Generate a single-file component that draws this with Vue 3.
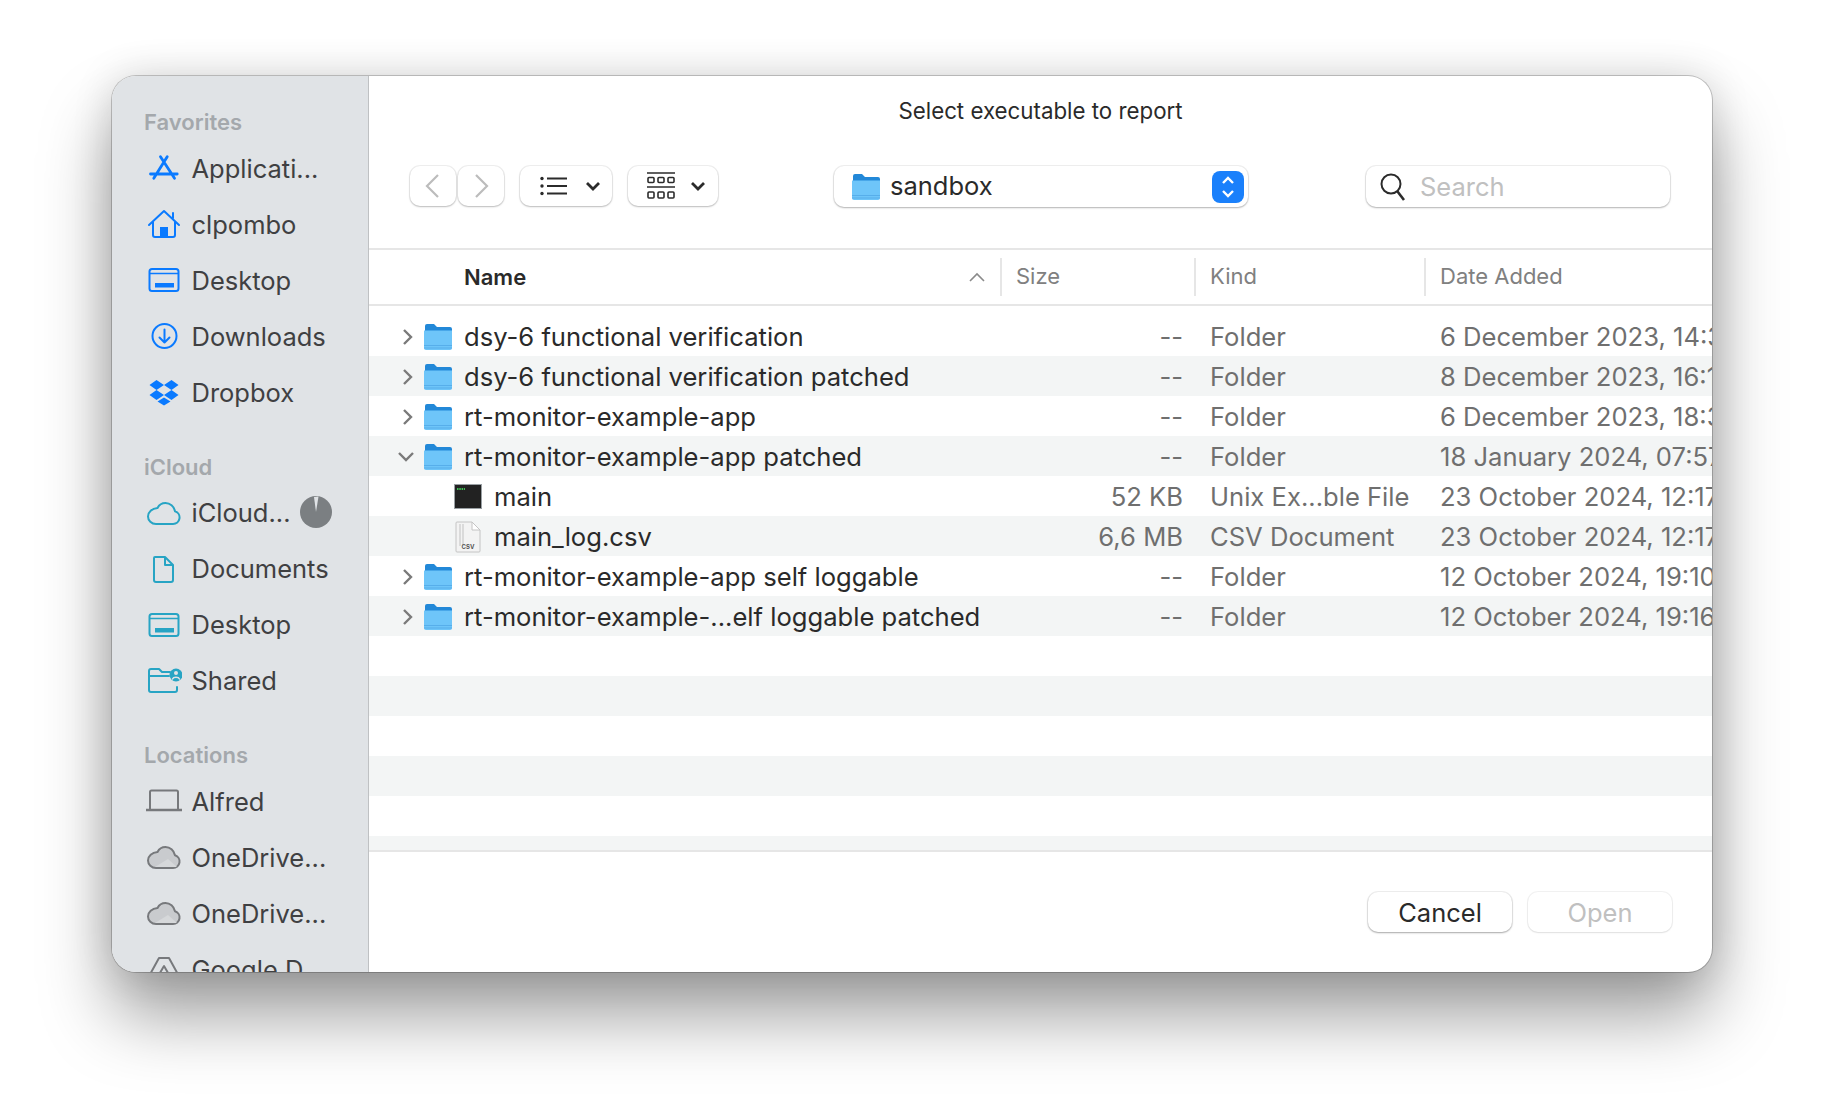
<template>
  <div class="page">
    <div class="dialog">
      <aside class="sidebar">
        <section v-for="group in sidebar" :key="group.title" class="side-group">
          <div class="side-title">{{ group.title }}</div>
          <div v-for="item in group.items" :key="item.label + item.icon" class="side-item">
            <svg class="side-icon" :style="{ color: group.color }" viewBox="0 -2 36 36" fill="none" stroke="currentColor" stroke-width="2" stroke-linecap="round" stroke-linejoin="round">
              <template v-if="item.icon === 'apps'">
                <path d="M14.500 4.700l14 21.600M21.200 4.700L7.800 26.300M4.500 22h26.700" stroke-width="2.800" />
              </template>
              <template v-else-if="item.icon === 'home'">
                <path d="M3 17L18 3l15 14M7 14v13a2 2 0 0 0 2 2h18a2 2 0 0 0 2-2V14M27 5v5" />
                <rect x="14" y="19" width="8" height="10" fill="currentColor" stroke="none" />
              </template>
              <template v-else-if="item.icon === 'desktop'">
                <rect x="3.500" y="5" width="29" height="22" rx="2.500" />
                <path d="M4 9.500h28" stroke-width="1.400" />
                <rect x="9" y="19" width="19" height="4.500" fill="currentColor" stroke="none" />
              </template>
              <template v-else-if="item.icon === 'download'">
                <circle cx="18.500" cy="16" r="12" />
                <path d="M18.500 9.500v13M13.500 17.500l5 5 5-5" />
              </template>
              <template v-else-if="item.icon === 'dropbox'">
                <path d="M10.500 4L3.500 9l7 5 7.500-5zM25.500 4L18 9l7.500 5 7-5zM10.500 14l-7 5 7 5 7.500-5zM25.500 14L18 19l7.500 5 7-5zM18 21.500l-6.500 4 6.500 4 6.500-4z" fill="currentColor" stroke="none" />
              </template>
              <template v-else-if="item.icon === 'cloud'">
                <path d="M10 27h17a6.500 6.500 0 0 0 2-12.700C28 9.500 24 6 19.500 6c-3.700 0-6.500 2-8 5C6 11.500 2 15 2 19.500 2 23.500 5.500 27 10 27z" />
              </template>
              <template v-else-if="item.icon === 'doc'">
                <path d="M9 4h10l8 8v15a2 2 0 0 1-2 2H10a2 2 0 0 1-2-2V5a1 1 0 0 1 1-1zM19 4v8h8" />
              </template>
              <template v-else-if="item.icon === 'shared'">
                <path d="M3 11V6a2 2 0 0 1 2-2h8l3 3h8M3 11h20M3 11v14a2 2 0 0 0 2 2h24a2 2 0 0 0 2-2v-3" />
                <circle cx="30" cy="10" r="6.500" fill="currentColor" stroke="none" />
                <circle cx="30" cy="8" r="2" fill="#e0e3e6" stroke="none" />
                <path d="M26.500 14c1-2.500 6-2.500 7 0" stroke="#e0e3e6" stroke-width="1.500" />
              </template>
              <template v-else-if="item.icon === 'laptop'">
                <path d="M4 24V7a1.500 1.500 0 0 1 1.500-1.500h25A1.500 1.500 0 0 1 32 7v17" />
                <path d="M0 25h36" stroke-width="2.600" stroke-linecap="butt" />
              </template>
              <template v-else-if="item.icon === 'drive'">
                <path d="M10 27h17a6.500 6.500 0 0 0 2-12.700C28 9.500 24 6 19.500 6c-3.700 0-6.500 2-8 5C6 11.500 2 15 2 19.500 2 23.500 5.500 27 10 27z" fill="#c9cbce" />
                <path d="M9 26l13-8 9 8z" fill="#d6d8da" stroke="none" />
              </template>
              <template v-else>
                <path d="M13 5h10l11 20-5 7H7l-5-7zM18 13l-7 12h14zM7 32l6-7" />
              </template>
            </svg>
            <span class="side-label">{{ item.label }}</span>
            <svg v-if="item.pie" class="pie" viewBox="0 0 32 32">
              <circle cx="16" cy="16" r="16" fill="#7b7f82" />
              <path d="M16 16L14 1 18.500 0.500z" fill="#e0e3e6" />
            </svg>
          </div>
        </section>
      </aside>

      <main class="panel">
        <div class="dialog-title">Select executable to report</div>

        <div class="toolbar">
          <div class="nav-buttons">
            <button class="tool-btn nav-btn back">
              <svg width="16" height="26" viewBox="0 0 16 26" fill="none" stroke="#bcbcbc" stroke-width="2.200"><path d="M14 2L3 13l11 11" /></svg>
            </button>
            <button class="tool-btn nav-btn forward">
              <svg width="16" height="26" viewBox="0 0 16 26" fill="none" stroke="#bcbcbc" stroke-width="2.200"><path d="M2 2l11 11L2 24" /></svg>
            </button>
          </div>
          <button class="tool-btn view-btn list-btn">
            <svg width="28" height="20" viewBox="0 0 28 20" fill="#2b2b2b">
              <circle cx="2" cy="2.500" r="1.700" /><circle cx="2" cy="10" r="1.700" /><circle cx="2" cy="17.500" r="1.700" />
              <rect x="7" y="1.500" width="20" height="2" /><rect x="7" y="9" width="20" height="2" /><rect x="7" y="16.500" width="20" height="2" />
            </svg>
            <svg class="view-chevron" width="16" height="10" viewBox="0 0 16 10" fill="none" stroke="#2b2b2b" stroke-width="2.800"><path d="M2 2l6 6 6-6" /></svg>
          </button>
          <button class="tool-btn view-btn grid-btn">
            <svg width="28" height="28" viewBox="0 0 28 28" fill="none" stroke="#2b2b2b" stroke-width="1.600">
              <path d="M0 1h28M0 15h28" />
              <rect x="1" y="5.500" width="6" height="5" rx="1" /><rect x="11" y="5.500" width="6" height="5" rx="1" /><rect x="21" y="5.500" width="6" height="5" rx="1" />
              <rect x="1" y="20" width="6" height="6" rx="1" /><rect x="11" y="20" width="6" height="6" rx="1" /><rect x="21" y="20" width="6" height="6" rx="1" />
            </svg>
            <svg class="view-chevron" width="16" height="10" viewBox="0 0 16 10" fill="none" stroke="#2b2b2b" stroke-width="2.800"><path d="M2 2l6 6 6-6" /></svg>
          </button>

          <div class="location">
            <svg class="folder loc-folder" viewBox="0 0 28 27">
              <path d="M1 3a2 2 0 0 1 2-2h7l3 3h13a2 2 0 0 1 2 2v6H1z" fill="#2288d8" />
              <path d="M0 7.500h28V25a2 2 0 0 1-2 2H2a2 2 0 0 1-2-2z" fill="#6ec5f9" />
              <path d="M0 22h28v1H0zM0 24.500h28v1H0z" fill="#57aeea" />
            </svg>
            <span class="loc-name">sandbox</span>
            <span class="stepper">
              <svg width="14" height="24" viewBox="0 0 14 24" fill="none" stroke="#fff" stroke-width="2.400"><path d="M2 8l5-5 5 5M2 16l5 5 5-5" /></svg>
            </span>
          </div>

          <div class="search">
            <svg width="28" height="30" viewBox="0 0 28 30" fill="none" stroke="#2b2b2b" stroke-width="2"><circle cx="12" cy="12" r="9.500" /><path d="M18.500 19.500L25 28" stroke-width="2.600" /></svg>
            <span class="search-text">Search</span>
          </div>
        </div>

        <div class="table-head">
          <div class="th th-name">
            <span>Name</span>
            <svg width="18" height="10" viewBox="0 0 18 10" fill="none" stroke="#8a8a8a" stroke-width="1.600"><path d="M2 9l7-7 7 7" /></svg>
          </div>
          <div class="th">Size</div>
          <div class="th">Kind</div>
          <div class="th">Date Added</div>
        </div>

        <div class="rows">
          <div v-for="(row, i) in rows" :key="i" class="row" :class="{ alt: i % 2 === 1 }">
            <template v-if="row.name">
              <div class="cell-name" :class="{ child: row.type !== 'folder' }">
                <svg v-if="row.type === 'folder'" class="disclosure" :class="{ open: row.open }" width="12" height="18" viewBox="0 0 12 18" fill="none" stroke="#7a7a7a" stroke-width="2.400"><path d="M2 2l7 7-7 7" /></svg>
                <svg v-if="row.type === 'folder'" class="folder" viewBox="0 0 28 27">
                  <path d="M1 3a2 2 0 0 1 2-2h7l3 3h13a2 2 0 0 1 2 2v6H1z" fill="#2288d8" />
                  <path d="M0 7.500h28V25a2 2 0 0 1-2 2H2a2 2 0 0 1-2-2z" fill="#6ec5f9" />
                  <path d="M0 22h28v1H0zM0 24.500h28v1H0z" fill="#57aeea" />
                </svg>
                <svg v-else-if="row.type === 'exec'" class="file-icon" viewBox="0 0 28 32">
                  <rect x="0.500" y="3.500" width="27" height="24" fill="#222" stroke="#9aa0a4" />
                  <path d="M3 8h8" stroke="#3fbf55" stroke-width="2" stroke-dasharray="1.500 0.800" />
                </svg>
                <svg v-else class="file-icon" viewBox="0 0 28 32">
                  <path d="M3 1h15l8 8v21a1 1 0 0 1-1 1H3a1 1 0 0 1-1-1V2a1 1 0 0 1 1-1z" fill="#f3f3f3" stroke="#c4c4c4" />
                  <path d="M18 1v8h8z" fill="#fff" stroke="#c4c4c4" />
                  <path d="M6 3v22M9 3v22" stroke="#d2d2d2" stroke-width="1.500" />
                  <text x="14" y="28" text-anchor="middle" class="csv-tag">CSV</text>
                </svg>
                <span class="name-text">{{ row.name }}</span>
              </div>
              <div class="cell-size">{{ row.size }}</div>
              <div class="cell">{{ row.kind }}</div>
              <div class="cell">{{ row.date }}</div>
            </template>
          </div>
        </div>

        <div class="footer">
          <button class="foot-btn">Cancel</button>
          <button class="foot-btn disabled">Open</button>
        </div>
      </main>
    </div>
  </div>
</template>

<script setup>
const sidebar = [
  {
    title: 'Favorites',
    color: '#0a7aff',
    items: [
      { icon: 'apps', label: 'Applicati...' },
      { icon: 'home', label: 'clpombo' },
      { icon: 'desktop', label: 'Desktop' },
      { icon: 'download', label: 'Downloads' },
      { icon: 'dropbox', label: 'Dropbox' },
    ],
  },
  {
    title: 'iCloud',
    color: '#27a4c4',
    items: [
      { icon: 'cloud', label: 'iCloud...', pie: true },
      { icon: 'doc', label: 'Documents' },
      { icon: 'desktop', label: 'Desktop' },
      { icon: 'shared', label: 'Shared' },
    ],
  },
  {
    title: 'Locations',
    color: '#77797c',
    items: [
      { icon: 'laptop', label: 'Alfred' },
      { icon: 'drive', label: 'OneDrive...' },
      { icon: 'drive', label: 'OneDrive...' },
      { icon: 'google', label: 'Google D...' },
    ],
  },
]

const rows = [
  { type: 'folder', name: 'dsy-6 functional verification', size: '--', kind: 'Folder', date: '6 December 2023, 14:33' },
  { type: 'folder', name: 'dsy-6 functional verification patched', size: '--', kind: 'Folder', date: '8 December 2023, 16:18' },
  { type: 'folder', name: 'rt-monitor-example-app', size: '--', kind: 'Folder', date: '6 December 2023, 18:32' },
  { type: 'folder', open: true, name: 'rt-monitor-example-app patched', size: '--', kind: 'Folder', date: '18 January 2024, 07:57' },
  { type: 'exec', name: 'main', size: '52 KB', kind: 'Unix Ex...ble File', date: '23 October 2024, 12:17' },
  { type: 'csv', name: 'main_log.csv', size: '6,6 MB', kind: 'CSV Document', date: '23 October 2024, 12:17' },
  { type: 'folder', name: 'rt-monitor-example-app self loggable', size: '--', kind: 'Folder', date: '12 October 2024, 19:10' },
  { type: 'folder', name: 'rt-monitor-example-...elf loggable patched', size: '--', kind: 'Folder', date: '12 October 2024, 19:16' },
  {}, {}, {}, {}, {}, {}, {},
]
</script>

<style>
html,
body {
  background: #fff;
}
</style>

<style scoped>
.page {
  width: 1824px;
  height: 1120px;
  padding: 76px 0 0 112px;
  box-sizing: border-box;
  overflow: hidden;
  font-family: Inter, "Liberation Sans", sans-serif;
}

.dialog {
  width: 1600px;
  height: 896px;
  display: flex;
  overflow: hidden;
  background: #fff;
  border-radius: 24px;
  box-shadow: 0 0 0 1px rgba(0, 0, 0, 0.2), 0 44px 70px rgba(0, 0, 0, 0.38), 0 0 40px rgba(0, 0, 0, 0.14);
}

.sidebar {
  width: 257px;
  flex: none;
  box-sizing: border-box;
  padding: 28px 0 0 32px;
  background: #e0e3e6;
  border-right: 1px solid #bfc1c3;
  overflow: hidden;
}

.side-group {
  margin-bottom: 28.500px;
}

.side-title {
  height: 36px;
  line-height: 36px;
  font-size: 22px;
  font-weight: 600;
  color: #a4a8ac;
}

.side-item {
  height: 56px;
  display: flex;
  align-items: center;
  position: relative;
  margin-left: 1.500px;
}

.side-icon {
  width: 36px;
  height: 36px;
  flex: none;
}

.side-label {
  margin-left: 10px;
  font-size: 25.500px;
  color: #3f4042;
  white-space: nowrap;
}

.pie {
  width: 32px;
  height: 32px;
  position: absolute;
  left: 154.500px;
  top: 11px;
}

.panel {
  flex: 1;
  min-width: 0;
  display: flex;
  flex-direction: column;
}

.dialog-title {
  height: 64px;
  padding-top: 17px;
  box-sizing: border-box;
  text-align: center;
  line-height: 36px;
  font-size: 22.300px;
  color: #2a2a2a;
}

.toolbar {
  height: 110px;
  flex: none;
  display: flex;
  align-items: flex-start;
  padding: 26px 0 0 41px;
  box-sizing: border-box;
  border-bottom: 2px solid #e6e6e6;
}

.tool-btn {
  height: 40px;
  padding: 0;
  border: 0;
  border-radius: 10px;
  background: #fff;
  box-shadow: 0 0 0 1px rgba(0, 0, 0, 0.06), 0 1px 2px rgba(0, 0, 0, 0.22);
  display: flex;
  align-items: center;
}

.nav-buttons {
  display: flex;
  gap: 2px;
  margin-right: 16px;
}

.nav-btn {
  width: 46px;
  justify-content: center;
}

.nav-btn.back {
  padding-right: 2px;
}

.nav-btn.forward {
  padding-left: 2px;
}

.view-btn {
  justify-content: flex-start;
}

.list-btn {
  width: 92px;
  padding-left: 20px;
  box-sizing: border-box;
  margin-right: 16px;
}

.grid-btn {
  width: 90px;
  padding-left: 19px;
  box-sizing: border-box;
}

.view-chevron {
  margin-left: 17px;
}

.grid-btn .view-chevron {
  margin-left: 15px;
}

.location {
  width: 414px;
  height: 41px;
  margin-left: 116px;
  padding-left: 10px;
  box-sizing: border-box;
  display: flex;
  align-items: center;
  border-radius: 10px;
  box-shadow: 0 0 0 1px rgba(0, 0, 0, 0.06), 0 1px 2px rgba(0, 0, 0, 0.25);
  flex: none;
}

.loc-folder {
  margin: 0 10px 0 8px;
}

.loc-name {
  flex: 1;
  font-size: 25.500px;
  color: #2a2a2a;
  margin-bottom: 2px;
}

.stepper {
  width: 32px;
  height: 32px;
  margin-right: 4px;
  border-radius: 8px;
  background: #1a80fb;
  display: flex;
  align-items: center;
  justify-content: center;
}

.search {
  width: 304px;
  height: 41px;
  margin-left: 118px;
  padding-left: 13px;
  box-sizing: border-box;
  display: flex;
  align-items: center;
  gap: 13px;
  border-radius: 10px;
  box-shadow: 0 0 0 1px rgba(0, 0, 0, 0.06), 0 1px 2px rgba(0, 0, 0, 0.25);
  flex: none;
}

.search-text {
  font-size: 25.500px;
  color: #c0c0c0;
}

.table-head {
  height: 56px;
  flex: none;
  display: grid;
  grid-template-columns: 633px 194px 230px 290px;
  align-items: center;
  border-bottom: 2px solid #e6e6e6;
  box-sizing: border-box;
}

.th {
  height: 38px;
  line-height: 36px;
  padding-left: 14px;
  font-size: 22px;
  color: #808080;
  border-right: 2px solid #e6e6e6;
  white-space: nowrap;
}

.th:last-child {
  border-right: 0;
}

.th-name {
  padding: 0 14px 0 95px;
  display: flex;
  align-items: center;
  justify-content: space-between;
  font-weight: 600;
  color: #2a2a2a;
}

.rows {
  height: 544px;
  padding-top: 10px;
  box-sizing: border-box;
  overflow: hidden;
  flex: none;
}

.row {
  height: 40px;
  box-sizing: border-box;
  padding-top: 1px;
  display: grid;
  grid-template-columns: 632px 194px 230px 290px;
  align-items: center;
  font-size: 25.600px;
  color: #6f6f6f;
  white-space: nowrap;
}

.row.alt {
  background: #f3f5f5;
}

.cell-name {
  position: relative;
  display: flex;
  align-items: center;
  padding-left: 55px;
  color: #2a2a2a;
}

.cell-name.child {
  padding-left: 85px;
}

.disclosure {
  position: absolute;
  left: 33px;
  top: 50%;
  margin-top: -9px;
}

.disclosure.open {
  transform: rotate(90deg);
  left: 31px;
}

.folder {
  width: 28px;
  height: 27px;
  flex: none;
}

.file-icon {
  width: 28px;
  height: 32px;
  flex: none;
}

.csv-tag {
  font-size: 6px;
  font-weight: 700;
  fill: #555;
}

.name-text {
  margin-left: 12px;
}

.cell-size {
  text-align: right;
  padding-right: 12px;
}

.cell {
  padding-left: 15px;
  overflow: hidden;
}

.footer {
  flex: 1;
  display: flex;
  justify-content: flex-end;
  align-items: flex-start;
  gap: 16px;
  padding: 40px 40px 0 0;
  border-top: 2px solid #e6e6e6;
  box-sizing: border-box;
}

.foot-btn {
  width: 144px;
  height: 40px;
  padding: 0;
  border: 0;
  border-radius: 10px;
  background: #fff;
  font: inherit;
  font-size: 25.500px;
  color: #2a2a2a;
  box-shadow: 0 0 0 1px rgba(0, 0, 0, 0.06), 0 1px 2px rgba(0, 0, 0, 0.3);
}

.foot-btn.disabled {
  color: #c0c0c0;
  box-shadow: 0 0 0 1px rgba(0, 0, 0, 0.05), 0 1px 2px rgba(0, 0, 0, 0.08);
}
</style>
